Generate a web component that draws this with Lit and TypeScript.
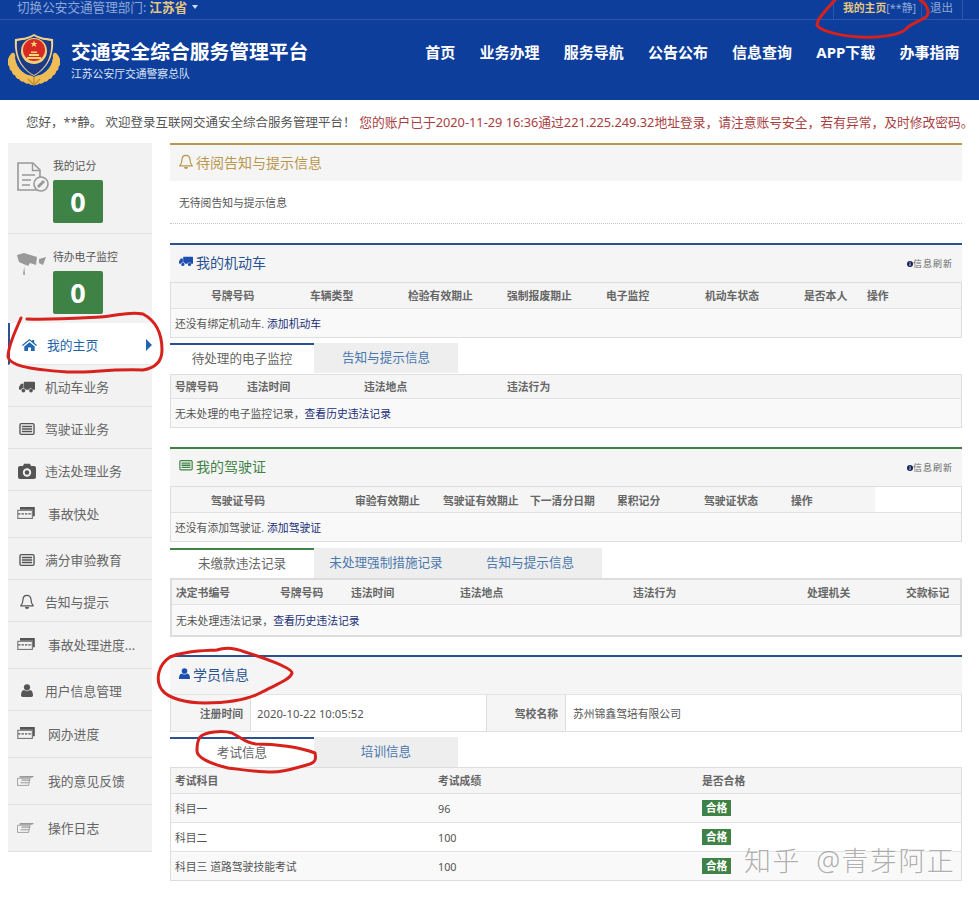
import { LitElement, html, css, svg } from "lit";
import { customElement } from "lit/decorators.js";

const ICONS: Record<string, any> = {
  truck: html`<svg class="ic" viewBox="0 0 20 15" width="16" height="12"><path fill="currentColor" d="M7 1h12.200c.4 0 .8.4.8.8V11h-3a2.600 2.600 0 0 0-5 0H8.600A2.600 2.600 0 0 0 6 9.300V1.500zM5.500 3.500V9.200a2.600 2.600 0 0 0-3 1.800H1c-.6 0-1-.4-1-1V7.500L2.500 3.500z"/><circle cx="5.500" cy="12" r="2.300" fill="currentColor"/><circle cx="15" cy="12" r="2.300" fill="currentColor"/></svg>`,
  list: html`<svg class="ic" viewBox="0 0 18 14" width="16" height="12"><rect x=".8" y=".8" width="16.400" height="12.400" rx="1.500" fill="none" stroke="currentColor" stroke-width="1.600"/><path stroke="currentColor" stroke-width="1.700" d="M3 4.200h12M3 7h12M3 9.800h12"/></svg>`,
  camera: html`<svg class="ic" viewBox="0 0 18 16" width="18" height="16"><path fill="currentColor" fill-rule="evenodd" d="M2 3h3l1-2.300h6L13 3h3c1.100 0 2 .9 2 2v9c0 1.100-.9 2-2 2H2c-1.100 0-2-.9-2-2V5c0-1.100.9-2 2-2zm7 2.300a4.200 4.200 0 1 0 0 8.400 4.200 4.200 0 0 0 0-8.400zm0 1.900a2.300 2.300 0 1 1 0 4.600 2.300 2.300 0 0 1 0-4.600z"/></svg>`,
  ticket: html`<svg class="ic" viewBox="0 0 19 13" width="18" height="12"><path fill="currentColor" d="M3 0h16v10h-2V3H3z"/><rect x=".6" y="3.600" width="15.800" height="8.800" fill="none" stroke="#777" stroke-width="1.200"/><path stroke="#555" stroke-width="1.300" stroke-dasharray="2.500 1.200" d="M1 7.500h15"/></svg>`,
  bell: html`<svg class="ic" viewBox="0 0 14 16" width="14" height="16"><path fill="none" stroke="currentColor" stroke-width="1.200" stroke-linejoin="round" d="M7 1.300c-2.500 0-4 1.900-4 4.200 0 3.600-1.100 4.900-2.300 6.300h12.600C12.100 10.400 11 9.100 11 5.500c0-2.300-1.500-4.200-4-4.200z"/><path fill="currentColor" d="M5 13h4a2 2 0 0 1-4 0z"/></svg>`,
  user: html`<svg class="ic" viewBox="0 0 14 15" width="12" height="13"><circle cx="7" cy="3.800" r="3.600" fill="currentColor"/><path fill="currentColor" d="M0 13c0-3.500 1.400-5.500 3.500-6 1 .9 2.200 1.300 3.500 1.300s2.500-.4 3.500-1.300c2.100.5 3.500 2.500 3.500 6 0 1.200-.8 2-2 2H2c-1.200 0-2-.8-2-2z"/></svg>`,
  folder: html`<svg class="ic" viewBox="0 0 19 12" width="17" height="11"><path fill="none" stroke="#999" stroke-width="1" d="M.5 11.500V3.500h14l-1.500 8z"/><path fill="#999" d="M3 1h16l-2 2H3zM5 5h10l-.4 1.200H5zM4 8h9.500l-.3 1.200H4z"/></svg>`,
  home: html`<svg class="ic" viewBox="0 0 15 12" width="15" height="12"><path fill="currentColor" d="M7.500 0l2.700 2.200V1h2v2.800L15 6l-.8 1-6.700-5.400L.8 7 0 6z"/><path fill="currentColor" d="M7.500 3.200l5.200 4.200V12H9V8.500H6V12H2.300V7.400z"/></svg>`,
  info: html`<svg class="ic" viewBox="0 0 8 8" width="7" height="7"><circle cx="4" cy="4" r="4" fill="currentColor"/><path stroke="#fff" stroke-width="1.200" d="M4 3.200V6.500M4 1.300v1"/></svg>`,
};

const SIDE = [
  { icon: "truck", label: "机动车业务" },
  { icon: "list", label: "驾驶证业务" },
  { icon: "camera", label: "违法处理业务" },
  { icon: "ticket", label: "事故快处", wide: true },
  { icon: "list", label: "满分审验教育" },
  { icon: "bell", label: "告知与提示" },
  { icon: "ticket", label: "事故处理进度...", wide: true },
  { icon: "user", label: "用户信息管理" },
  { icon: "ticket", label: "网办进度", wide: true },
  { icon: "folder", label: "我的意见反馈", wide: true },
  { icon: "folder", label: "操作日志", wide: true },
];

const LEAVES = [0, 1, 2, 3, 4, 5, 6, 7];

@customElement("app-root")
export class AppRoot extends LitElement {
  static styles = css`
    :host { display: block; position: relative; width: 979px; height: 900px; overflow: hidden; background: #fff;
      font-family: "Noto Sans", "Noto Sans CJK SC", sans-serif; color: #555; font-size: 10.800px; }
    .ic { display: block; flex: none; }
    .topbar { height: 19px; background: #0e3e9b; border-bottom: 1px solid #2a57ab; display: flex; align-items: flex-start;
      padding-left: 17px; font-size: 12.600px; line-height: 15px; color: #8fa9d8; white-space: nowrap; }
    .prov { color: #e6c77f; font-weight: 700; margin-left: 3px; font-size: 12.600px; }
    .caret { width: 0; height: 0; border: 3.500px solid transparent; border-top: 4px solid #cfdcf3; border-bottom: 0; margin: 5px 0 0 5px; }
    .userbox { margin-left: auto; display: flex; font-size: 10.800px; height: 19px; line-height: 16px; white-space: nowrap; }
    .usercell { border-left: 1px solid #2a57ab; display: flex; box-sizing: border-box; }
    .usercell.me { width: 88px; padding-left: 9px; }
    .usercell.quit { width: 42px; border-right: 1px solid #2a57ab; margin-right: 16px; padding-left: 8px; font-size: 11.500px; }
    .me b { color: #e6c77f; }
    .header { height: 80px; background: #0e3e9b; display: flex; align-items: flex-start; padding-left: 8px; color: #fff; }
    .emblem { margin-top: 13px; flex: none; }
    .brand { margin: 17px 0 0 11px; }
    .brand h1 { margin: 0; font-size: 19.800px; line-height: 29px; font-weight: 700; white-space: nowrap; }
    .brand p { margin: 0; font-size: 10.800px; line-height: 15px; color: #dce6f7; white-space: nowrap; }
    .nav { margin: 22px 19.500px 0 auto; display: flex; gap: 24.200px; font-size: 15px; font-weight: 700; line-height: 20px; white-space: nowrap; }
    .welcome { height: 43px; line-height: 44px; padding-left: 26px; font-size: 12.500px; color: #555; white-space: nowrap; }
    .warn { color: #a8403f; margin-left: 3.600px; font-size: 12.780px; }
    .body { display: flex; padding-left: 8px; gap: 18px; align-items: flex-start; }
    .side { width: 144px; height: 709px; background: #f2f2f2; flex: none; color: #666; }
    .score { display: grid; grid-template-columns: 45px 50px; box-sizing: border-box; align-content: start; padding-top: 15px; }
    .score.a { height: 91px; border-bottom: 1px solid #e2e2e2; }
    .score.b { height: 89px; }
    .score .lab { font-size: 10.800px; line-height: 16px; color: #555; white-space: nowrap; height: 22px; }
    .score svg { grid-row: 1 / span 2; margin: 4px 0 0 9px; }
    .zero { width: 50px; height: 43px; background: #3f8246; border-radius: 2px; color: #fff; font-size: 27px; font-weight: 700;
      display: flex; align-items: center; justify-content: center; font-family: "Open Sans", sans-serif; }
    .item { display: flex; align-items: center; height: 42px; border-bottom: 1px solid #e0e0e0; box-sizing: border-box; font-size: 12.800px; color: #666; white-space: nowrap; padding: 2px 0 0 10px; }
    .item .slot { width: 18px; margin-right: 9px; display: flex; justify-content: center; color: #555; flex: none; }
    .item.wide { height: 47px; padding: 0 0 2px 9px; }
    .item.wide .slot { width: 19px; margin-right: 12px; justify-content: flex-start; }
    .item.active { background: #fff; color: #2463a8; border-left: 2px solid #2a5291; border-bottom-color: #e8e8e8; padding-left: 12px; }
    .item.active .slot { width: 15px; margin-right: 10px; color: #2066b0; }
    .arrow { width: 0; height: 0; border: 6px solid transparent; border-left: 6px solid #2066b0; border-right: 0; margin-left: auto; }
    .main { width: 792px; flex: none; }
    .sec { border-top: 2px solid #2a5291; }
    .sec.gold { border-top-color: #b8974f; }
    .sec.green { border-top-color: #3f8246; }
    .head { height: 37px; background: #f5f5f5; display: flex; align-items: center; padding: 0 9px 4px; gap: 3px; font-size: 14px; color: #2a5291; box-sizing: border-box; }
    .sec.gold .head { height: 36px; color: #b8974f; padding-bottom: 2px; }
    .head .ic { width: 14px; height: auto; }
    .sec.green .head { color: #3f8246; }
    .head.b .ic { color: #1d4fb0; }
    .head.u .ic { width: 11px; }
    .refresh { margin: 4px 0 0 auto; display: flex; align-items: center; font-size: 9px; letter-spacing: 1px; color: #666; }
    .head .refresh .ic { width: 6px; color: #16235f; }
    .notice { height: 43px; box-sizing: border-box; border-bottom: 1px dotted #c4c4c4; padding: 13px 9px 0; line-height: 18px; color: #555; margin-bottom: 19px; }
    .table { border: 1px solid #ddd; background: #f9f9f9; box-sizing: border-box; }
    .table.thick { border-width: 2px; }
    .tr { display: grid; align-items: center; }
    .th { font-weight: 700; background: #f5f5f5; color: #666; border-bottom: 1px solid #e2e2e2; white-space: nowrap; }
    .td { color: #555; white-space: nowrap; padding-left: 4px; height: 28px; }
    a { color: #1a2f78; text-decoration: none; }
    .t1 .th { height: 24px; padding-bottom: 1px; grid-template-columns: 99px 98px 99px 99px 99px 99px 63px 1fr; padding-left: 40px; }
    .t2 .th { height: 22px; padding-bottom: 1px; grid-template-columns: 72px 117px 143px 1fr; padding-left: 4px; }
    .t3 .th { height: 25px; grid-template-columns: 144px 88px 87px 87px 87px 87px 1fr; padding-left: 40px; box-sizing: content-box; border-bottom: 0; width: 664px; }
    .t3 .headwrap { background: #fff; border-bottom: 1px solid #e2e2e2; }
    .t4 .th { height: 24px; grid-template-columns: 104px 71px 109px 173px 174px 99px 1fr; padding-left: 4px; }
    .t4 .td { height: 30px; }
    .t5 .th { height: 24px; padding-bottom: 1px; grid-template-columns: 263px 264px 1fr; padding-left: 4px; }
    .t5 .r { height: 28px; grid-template-columns: 263px 264px 1fr; padding-left: 4px; border-bottom: 1px solid #e2e2e2; color: #555; background: #f9f9f9; }
    .t5 .r.w { background: #fff; }
    .t5 .r:last-child { border-bottom: 0; }
    .tabs { display: flex; height: 30px; margin: 5px 0 1px; font-size: 12.600px; }
    .tabs.tight { margin: 6px 0 0; }
    .tabs.flush { margin: 5px 0 0; }
    .tab { width: 144px; box-sizing: border-box; background: #eeeeee; color: #4a78ad; text-align: center; line-height: 30px; white-space: nowrap; }
    .tab.on { background: #fff; color: #666; border-top: 2px solid #2a5291; line-height: 28px; }
    .tab.on.g { border-top-color: #3f8246; }
    .gap { height: 19px; }
    .gap.s { height: 18px; }
    .info { display: grid; grid-template-columns: 79px 236px 79px 1fr; height: 38px; border: 1px solid #ddd; border-top-color: #e4e4e4; box-sizing: border-box; align-items: stretch; }
    .info > div { display: flex; align-items: center; border-left: 1px solid #ddd; padding-left: 7px; white-space: nowrap; }
    .info > div:first-child { border-left: 0; }
    .info .date { font-size: 11.300px; padding-left: 6px; }
    .info .l { justify-content: flex-end; padding: 0 7px 0 0; background: #f5f5f5; font-weight: 700; color: #666; }
    .tag { justify-self: start; width: 29px; height: 16px; box-sizing: border-box; background: #3f8246; color: #fff; font-weight: 700; line-height: 16px; text-align: center; white-space: nowrap; }
    .ink { position: absolute; left: 0; top: 0; pointer-events: none; }
    .mark { position: absolute; left: 744px; top: 842px; font-size: 27px; line-height: 38px; font-weight: 300; letter-spacing: 1.400px; word-spacing: 7px; white-space: nowrap;
      color: rgba(125,125,125,.62); text-shadow: 1px 1px 0 rgba(255,255,255,.7); }
  `;

  private emblem() {
    return html`<svg class="emblem" width="52" height="54" viewBox="0 0 52 54">
      ${LEAVES.map((i) => {
        const a = 10 + i * 11;
        const r = (a * Math.PI) / 180;
        const x = 23 * Math.cos(r);
        const y = 22 + 25 * Math.sin(r);
        const t = a + 90;
        return svg`<ellipse cx=${26 + x} cy=${y} rx="7" ry="3.200" fill="#eebd57" transform="rotate(${t - 30} ${26 + x} ${y})"/>
          <ellipse cx=${26 - x} cy=${y} rx="7" ry="3.200" fill="#eebd57" transform="rotate(${-t + 30} ${26 - x} ${y})"/>`;
      })}
      <path fill="#f3d48a" d="M26 1c6 4 13 4 19 5 1 12-2 28-19 37C9 34 6 18 7 6c6-1 13-1 19-5z"/>
      <path fill="#1c3a86" d="M26 3c6 4 12 4 17 5 1 11-2 26-17 34C11 34 8 19 9 8c5-1 11-1 17-5z"/>
      <circle cx="26" cy="18" r="13" fill="#f0cf7c"/>
      <circle cx="26" cy="17" r="11" fill="#d72a22"/>
      <path fill="#f4d678" d="M21 21h10v2H21zM23 18.500h6V20h-6zM19 24h14v2H19zM26 7.500l1 2.500h2.500l-2 1.600.8 2.400-2.300-1.500-2.300 1.500.8-2.400-2-1.600H25z"/>
      <path fill="none" stroke="#c9922f" stroke-width="1.500" d="M20 46l6 6 6-6M26 44v8"/>
    </svg>`;
  }

  private docIcon() {
    return html`<svg width="32" height="30" viewBox="0 0 32 30"><path fill="none" stroke="#999" stroke-width="1.600" d="M1 1h15l7 7v20H1z"/><path fill="none" stroke="#999" stroke-width="1.400" d="M15.500 1.500V8.500h7M5 13h13M5 18h9M5 23h8"/><circle cx="24" cy="22" r="7" fill="#f2f2f2" stroke="#999" stroke-width="1.600"/><path stroke="#999" stroke-width="3" d="M21 25l6-6"/></svg>`;
  }

  private camIcon() {
    return html`<svg width="30" height="24" viewBox="0 0 30 24"><path fill="#999" d="M0 2l7-2 13 4-1 8-6-2-2 3-4-2L8 22l-2-.5 1.500-10L2 9zM22 6l7-2-3 8-4-2z"/></svg>`;
  }

  private ink() {
    return html`<svg class="ink" width="979" height="900" viewBox="0 0 979 900">
      <g fill="none" stroke="#d6211d" stroke-width="3" stroke-linecap="round" stroke-linejoin="round">
        <path d="M835 0C828 8 817 18 817 25C820 31 840 36 860 37C880 38 900 35 906 29C910 23 922 21 927 16C930 11 926 3 920 0"/>
        <path d="M21 318C16 330 8 345 8 357C10 365 25 369 67 372C90 373 105 369 143 370C155 368 162 362 162 350C162 335 158 322 143 314C128 311 118 316 100 317C80 318 50 320 27 319"/>
        <path d="M217 650C225 647 235 648 245 652C265 658 292 668 292 673C290 680 275 685 262 692C248 700 225 703 205 703C185 703 168 698 162 690C155 680 158 665 170 657C185 651 200 651 217 650"/>
        <path d="M200 737C205 732 222 730 232 733C242 738 245 743 256 744C275 744 300 747 315 753C316 758 316 762 310 764C295 768 285 772 272 772C258 772 245 770 228 768C210 764 196 757 197 750C197 744 198 740 200 737"/>
      </g>
    </svg>`;
  }

  render() {
    return html`
      <div class="topbar">
        <span>切换公安交通管理部门:</span><span class="prov">江苏省</span><span class="caret"></span>
        <div class="userbox">
          <div class="usercell me"><b>我的主页</b><span>[**静]</span></div>
          <div class="usercell quit">退出</div>
        </div>
      </div>
      <header class="header">
        ${this.emblem()}
        <div class="brand"><h1>交通安全综合服务管理平台</h1><p>江苏公安厅交通警察总队</p></div>
        <nav class="nav"><span>首页</span><span>业务办理</span><span>服务导航</span><span>公告公布</span><span>信息查询</span><span>APP下载</span><span>办事指南</span></nav>
      </header>
      <div class="welcome">您好，**静。 欢迎登录互联网交通安全综合服务管理平台！<span class="warn">您的账户已于2020-11-29 16:36通过221.225.249.32地址登录，请注意账号安全，若有异常，及时修改密码。</span></div>
      <div class="body">
        <aside class="side">
          <div class="score a">${this.docIcon()}<div class="lab">我的记分</div><div class="zero">0</div></div>
          <div class="score b">${this.camIcon()}<div class="lab">待办电子监控</div><div class="zero">0</div></div>
          <div class="item active"><span class="slot">${ICONS.home}</span>我的主页<span class="arrow"></span></div>
          ${SIDE.map((s) => html`<div class="item ${s.wide ? "wide" : ""}"><span class="slot">${ICONS[s.icon]}</span>${s.label}</div>`)}
        </aside>
        <main class="main">
          <section class="sec gold">
            <div class="head">${ICONS.bell}<span>待阅告知与提示信息</span></div>
            <div class="notice">无待阅告知与提示信息</div>
          </section>

          <section class="sec">
            <div class="head b">${ICONS.truck}<span>我的机动车</span>
              <span class="refresh">${ICONS.info}信息刷新</span></div>
            <div class="table t1">
              <div class="tr th"><span>号牌号码</span><span>车辆类型</span><span>检验有效期止</span><span>强制报废期止</span><span>电子监控</span><span>机动车状态</span><span>是否本人</span><span>操作</span></div>
              <div class="tr td"><span>还没有绑定机动车. <a>添加机动车</a></span></div>
            </div>
            <div class="tabs"><div class="tab on">待处理的电子监控</div><div class="tab">告知与提示信息</div></div>
            <div class="table t2">
              <div class="tr th"><span>号牌号码</span><span>违法时间</span><span>违法地点</span><span>违法行为</span></div>
              <div class="tr td"><span>无未处理的电子监控记录，<a>查看历史违法记录</a></span></div>
            </div>
          </section>
          <div class="gap"></div>

          <section class="sec green">
            <div class="head">${ICONS.list}<span>我的驾驶证</span>
              <span class="refresh">${ICONS.info}信息刷新</span></div>
            <div class="table t3">
              <div class="headwrap"><div class="tr th"><span>驾驶证号码</span><span>审验有效期止</span><span>驾驶证有效期止</span><span>下一清分日期</span><span>累积记分</span><span>驾驶证状态</span><span>操作</span></div></div>
              <div class="tr td"><span>还没有添加驾驶证. <a>添加驾驶证</a></span></div>
            </div>
            <div class="tabs tight"><div class="tab on g">未缴款违法记录</div><div class="tab">未处理强制措施记录</div><div class="tab">告知与提示信息</div></div>
            <div class="table thick t4">
              <div class="tr th"><span>决定书编号</span><span>号牌号码</span><span>违法时间</span><span>违法地点</span><span>违法行为</span><span>处理机关</span><span>交款标记</span></div>
              <div class="tr td"><span>无未处理违法记录，<a>查看历史违法记录</a></span></div>
            </div>
          </section>
          <div class="gap s"></div>

          <section class="sec">
            <div class="head b u">${ICONS.user}<span>学员信息</span></div>
            <div class="info">
              <div class="l">注册时间</div><div class="date">2020-10-22 10:05:52</div>
              <div class="l">驾校名称</div><div>苏州锦鑫驾培有限公司</div>
            </div>
            <div class="tabs flush"><div class="tab on">考试信息</div><div class="tab">培训信息</div></div>
            <div class="table t5">
              <div class="tr th"><span>考试科目</span><span>考试成绩</span><span>是否合格</span></div>
              <div class="tr r"><span>科目一</span><span>96</span><span class="tag">合格</span></div>
              <div class="tr r w"><span>科目二</span><span>100</span><span class="tag">合格</span></div>
              <div class="tr r"><span>科目三 道路驾驶技能考试</span><span>100</span><span class="tag">合格</span></div>
            </div>
          </section>
        </main>
      </div>
      ${this.ink()}
      <div class="mark">知乎 @青芽阿正</div>
    `;
  }
}
